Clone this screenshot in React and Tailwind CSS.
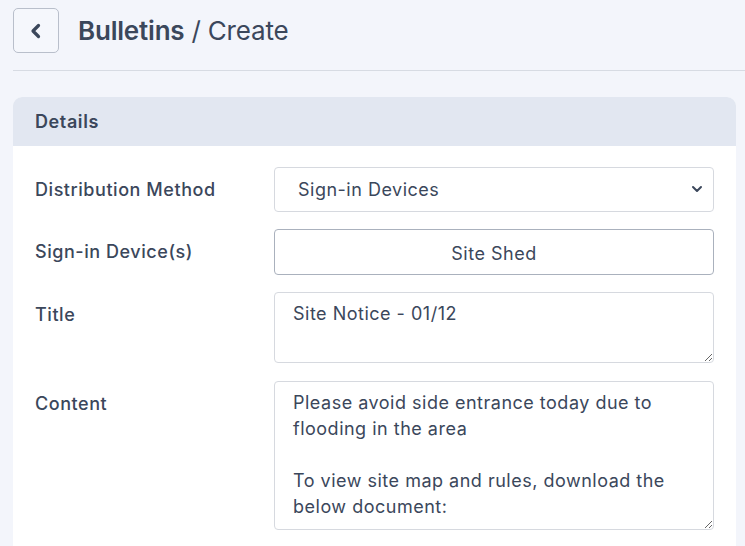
import { useState } from 'react';

// tela de criação de boletim

const Row = ({ label, children, className = '' }) => (
  <div className={`flex items-start ${className}`}>
    <div className="w-[239px] shrink-0 pt-[9px] text-[18px] tracking-[0.55px] font-medium text-[#3b475b]">{label}</div>
    <div className="w-[441px]">{children}</div>
  </div>
);

export default function App() {
  const [method, setMethod] = useState('devices');
  const [title, setTitle] = useState('Site Notice - 01/12');
  const [content, setContent] = useState(
    'Please avoid side entrance today due to flooding in the area\n\nTo view site map and rules, download the below document:'
  );

  return (
    <div className="bg-[#f3f5fb] pl-[13px] pt-[8px] font-['Inter',sans-serif] text-[#3b475b] overflow-hidden h-[546px]">
      <div className="flex items-center">
        <button className="w-[46px] h-[45px] rounded-[5px] border border-[#b9bfcb] bg-[#f5f7fc] flex items-center justify-center">
          <svg className="w-[18px] h-[18px] shrink-0" viewBox="0 0 18 18" fill="none">
            <path d="M11.5 3.5 L6 9 L11.5 14.5" stroke="#3b475b" strokeWidth="3.2" strokeLinecap="round" strokeLinejoin="round" />
          </svg>
        </button>
        <h1 className="ml-[19px] text-[26px] text-[#3b475b]">
          <span className="font-semibold tracking-[-0.2px]">Bulletins</span>
          <span className="font-normal tracking-[-0.2px]"> / Create</span>
        </h1>
      </div>
      <div className="mt-[17px] h-px bg-[#d7dbe3]" />

      <div className="mt-[26px] w-[723px] rounded-t-[9px] overflow-hidden bg-white">
        <div className="h-[49px] bg-[#e2e7f1] px-[22px] flex items-center text-[18px] tracking-[0.6px] font-semibold text-[#3b475b]">
          Details
        </div>
        <div className="px-[22px] pt-[21px] pb-6 flex flex-col">
          <Row label="Distribution Method">
            <div className="relative">
              <select
                value={method}
                onChange={(e) => setMethod(e.target.value)}
                className="appearance-none w-full h-[45px] rounded-[4px] border border-[#d6d9df] bg-white pl-[23px] text-[18px] tracking-[0.5px] text-[#3b475b] outline-none"
              >
                <option value="devices">Sign-in Devices</option>
                <option value="email">Email</option>
              </select>
              <svg className="absolute right-[11px] top-[17px] pointer-events-none" width="12" height="10" viewBox="0 0 12 10" fill="none">
                <path d="M2 3 L6 7 L10 3" stroke="#3b475b" strokeWidth="2" strokeLinecap="round" strokeLinejoin="round" />
              </svg>
            </div>
          </Row>
          <Row label="Sign-in Device(s)" className="mt-[17px]">
            <button className="w-full h-[46px] rounded-[4px] border border-[#aab1bd] bg-white pt-[2px] text-[18px] tracking-[0.5px] text-[#3b475b]">
              Site Shed
            </button>
          </Row>
          <Row label="Title" className="mt-[17px]">
            <textarea
              value={title}
              onChange={(e) => setTitle(e.target.value)}
              className="block w-full h-[71px] rounded-[4px] border border-[#d6d9df] px-[18px] pt-[8px] text-[18px] tracking-[0.5px] leading-[26px] text-[#3b475b] outline-none resize-y"
            />
          </Row>
          <Row label="Content" className="mt-[18px]">
            <textarea
              value={content}
              onChange={(e) => setContent(e.target.value)}
              className="block w-full h-[149px] rounded-[4px] border border-[#d6d9df] px-[18px] pt-[8px] text-[18px] tracking-[0.5px] leading-[26px] text-[#3b475b] outline-none resize-y"
            />
          </Row>
        </div>
      </div>
    </div>
  );
}
